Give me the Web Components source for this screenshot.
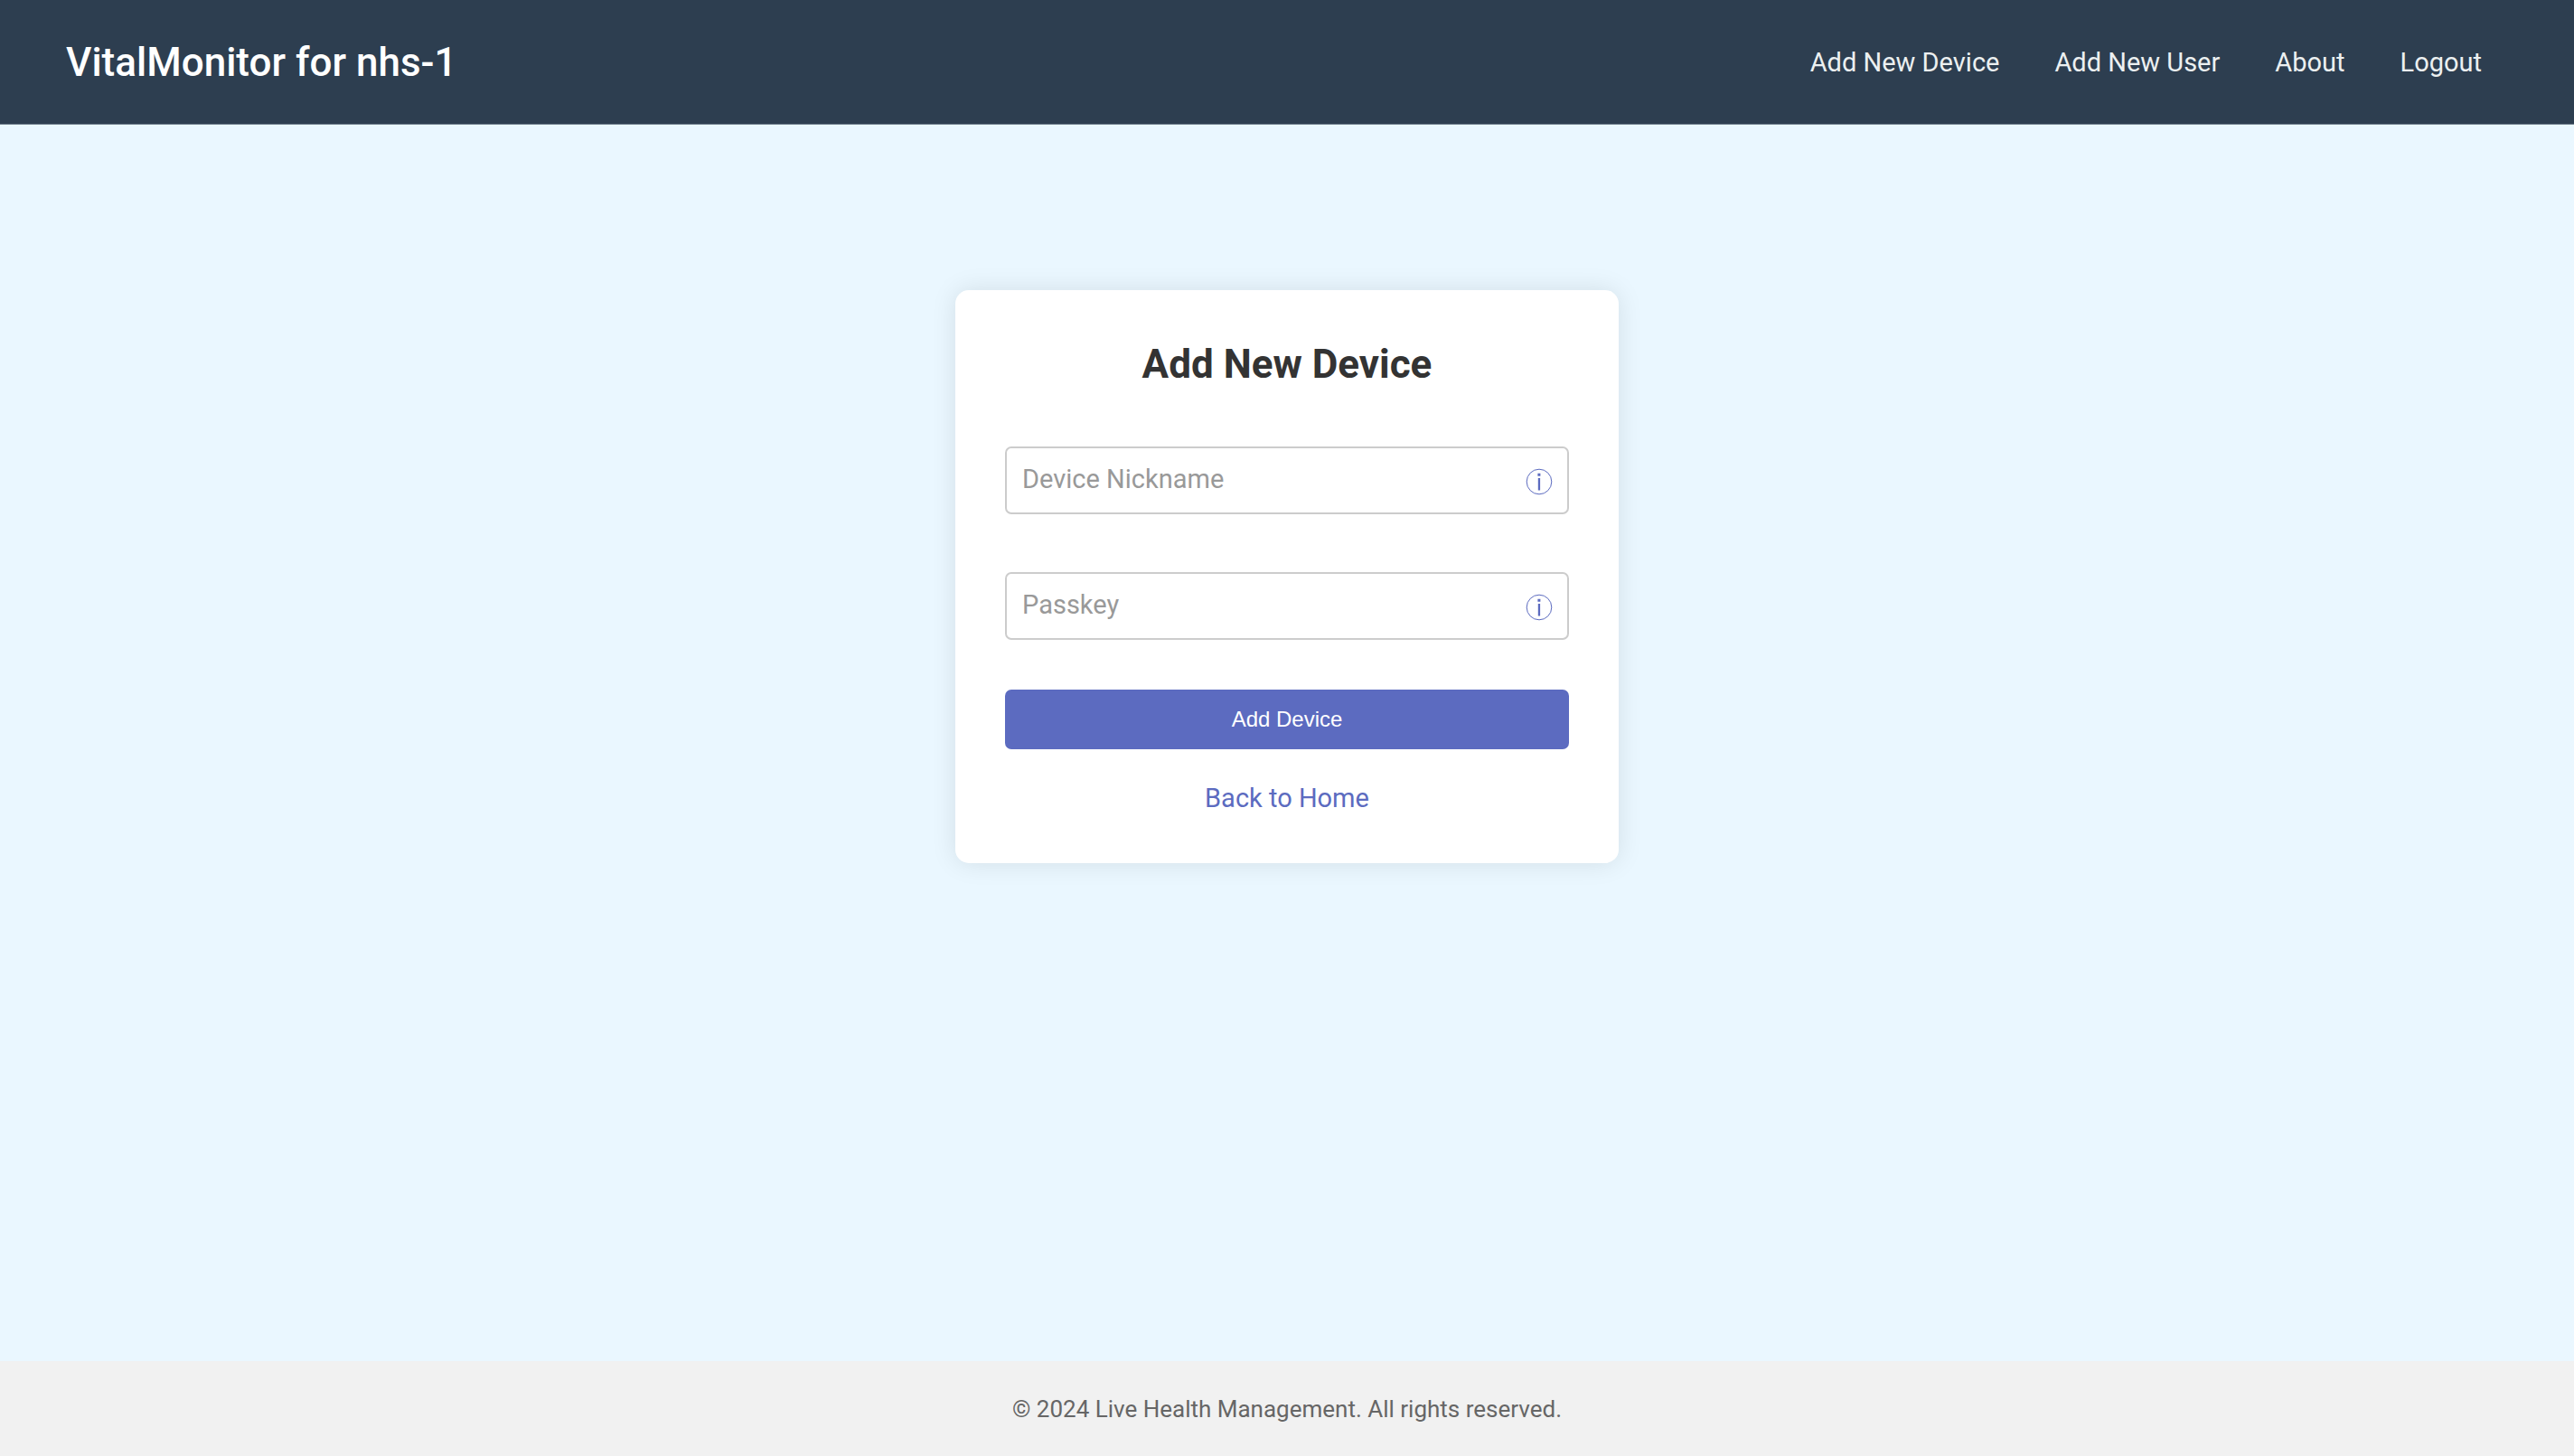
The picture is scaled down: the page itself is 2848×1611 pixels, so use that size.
<!DOCTYPE html>
<html lang="en">
<head>
<meta charset="utf-8">
<meta name="viewport" content="width=device-width, initial-scale=1">
<title>VitalMonitor</title>
<style>
  html, body { margin: 0; }
  body { font-family: Roboto, "Liberation Sans", sans-serif; font-size: 29px; line-height: 34px; background: #eaf7ff; }
</style>
</head>
<body>
<vital-page>
  <vital-header slot="header" heading="VitalMonitor for nhs-1">
    <vital-link href="#device">Add New Device</vital-link>
    <vital-link href="#user">Add New User</vital-link>
    <vital-link href="#about">About</vital-link>
    <vital-link href="#logout">Logout</vital-link>
  </vital-header>
  <device-card heading="Add New Device">
    <vital-field name="nickname" type="text" label="Device Nickname"></vital-field>
    <vital-field name="passkey" type="password" label="Passkey"></vital-field>
    <vital-button slot="action">Add Device</vital-button>
    <vital-link slot="back" href="#home">Back to Home</vital-link>
  </device-card>
  <vital-footer slot="footer">© 2024 Live Health Management. All rights reserved.</vital-footer>
</vital-page>

<script>
  const define = (name, render) => customElements.define(name, class extends HTMLElement {
    constructor() {
      super();
      this.attachShadow({ mode: 'open' });
    }
    connectedCallback() {
      this.shadowRoot.innerHTML = render(this);
    }
  });

  define('vital-page', () => `
    <style>
      :host { display: flex; flex-direction: column; min-height: 100vh; }
      main { flex: 1; display: flex; flex-direction: column; align-items: center; padding: 183px 24px 55px; }
    </style>
    <slot name="header"></slot>
    <main><slot></slot></main>
    <slot name="footer"></slot>`);

  define('vital-header', el => `
    <style>
      :host { display: block; --link-color: #ecf0f1; }
      header { display: flex; flex-wrap: wrap; align-items: center; justify-content: space-between;
        padding: 37px 73px; background: #2d3e50; border-bottom: 1px solid #738290; }
      h1 { margin: 0; padding-top: 2px; font-size: 44px; line-height: 61px; font-weight: 500; color: #fff; }
      nav { display: flex; flex-wrap: wrap; gap: 61px; padding: 0 29px; }
    </style>
    <header>
      <h1>${el.getAttribute('heading')}</h1>
      <nav><slot></slot></nav>
    </header>`);

  define('vital-link', el => `
    <style>
      :host { display: block; }
      a { color: var(--link-color, #5c6bc0); text-decoration: none; }
    </style>
    <a href="${el.getAttribute('href')}"><slot></slot></a>`);

  define('device-card', el => `
    <style>
      :host { display: block; box-sizing: border-box; width: 100%; max-width: 734px; padding: 55px;
        background: #fff; border-radius: 15px; box-shadow: 0 0 28px rgba(0, 0, 0, .1); text-align: center; }
      h2 { margin: 0 0 64px; font-size: 44px; line-height: 54px; font-weight: 700; color: #333; }
      form { display: flex; flex-direction: column; margin: 0 0 37px; gap: 55px; }
      .fields { display: flex; flex-direction: column; gap: 64px; }
    </style>
    <h2>${el.getAttribute('heading')}</h2>
    <form>
      <div class="fields"><slot></slot></div>
      <slot name="action"></slot>
    </form>
    <slot name="back"></slot>`);

  define('vital-field', el => `
    <style>
      :host { display: block; }
      .box { display: flex; align-items: center; box-sizing: border-box; height: 75px; padding: 0 16px 0 17px;
        border: 2px solid #ccc; border-radius: 7px; background: #fff; }
      input { flex: 1; min-width: 0; margin: 0; padding: 0 0 4px; border: 0; outline: 0; background: none;
        font: inherit; color: #333; }
      input::placeholder { color: #999; opacity: 1; }
      svg { display: block; width: 30px; height: 30px; margin-top: 2px; }
    </style>
    <div class="box">
      <input type="${el.getAttribute('type')}" name="${el.getAttribute('name')}"
        placeholder="${el.getAttribute('label')}" aria-label="${el.getAttribute('label')}">
      <svg viewBox="0 0 30 30" aria-hidden="true">
        <circle cx="15" cy="15" r="13.8" fill="none" stroke="#5c6bc0" stroke-width="1"/>
        <path d="M13.4 5.8h3v3h-3zM13.8 11h2.3v13.4h-2.3z" fill="#5c6bc0"/>
      </svg>
    </div>`);

  define('vital-button', () => `
    <style>
      :host { display: block; }
      button { display: block; width: 100%; margin: 0; padding: 18px; border: 0; border-radius: 7px;
        background: #5c6bc0; color: #fff; font: 24px/30px "Liberation Sans", Arial, sans-serif; }
    </style>
    <button type="button"><slot></slot></button>`);

  define('vital-footer', () => `
    <style>
      :host { display: block; }
      footer { padding: 38px 37px 36px; background: #f1f1f1; color: #666; font-size: 26px; line-height: 31px; text-align: center; }
    </style>
    <footer><slot></slot></footer>`);
</script>
</body>
</html>
